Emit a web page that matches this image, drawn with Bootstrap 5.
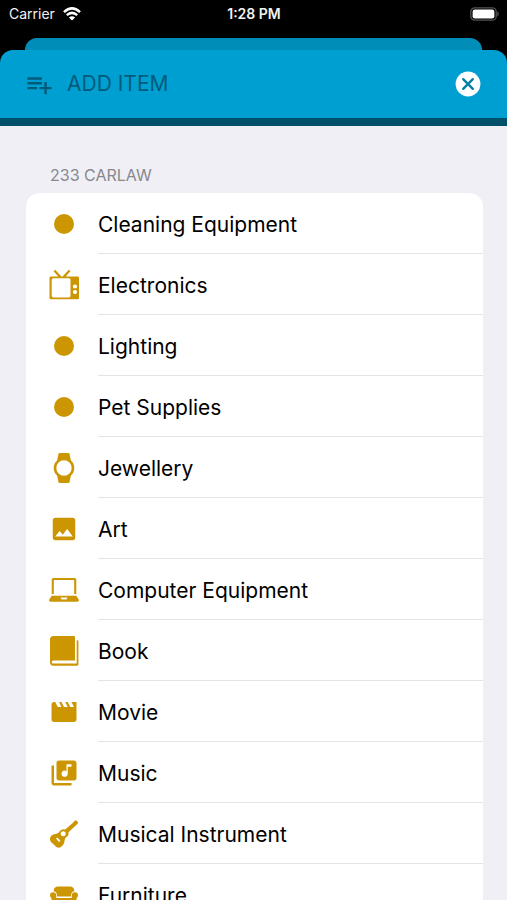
<!DOCTYPE html>
<html lang="en">
<head>
<meta charset="utf-8">
<meta name="viewport" content="width=device-width, initial-scale=1">
<title>Add Item</title>
<link href="https://cdn.jsdelivr.net/npm/bootstrap@5.3.0/dist/css/bootstrap.min.css" rel="stylesheet">
<style>
  body { font-family: Inter, "Liberation Sans", sans-serif; background: #f0eff5; color: #000; }
  .top-area { background: #000; }
  .status-bar { height: 38px; padding: 0 8px 10px 9px; font-size: 14px; line-height: 20px; color: #f2f2f2; }
  .back-sheet { height: 12px; margin: 0 25px; background: #008eb8; border-radius: 12px 12px 0 0; }
  .sheet-header { height: 76px; padding: 0 26px 0 25px; background: #009fd1; border-bottom: 8px solid #005069; border-radius: 13px 13px 0 0; color: #005b7a; }
  .sheet-title { margin: 0 0 0 13px; font-size: 21px; line-height: 28px; font-weight: 400; }
  .scroll-area { padding: 38px 24px 0 26px; scrollbar-width: none; }
  .scroll-area::-webkit-scrollbar { display: none; }
  .group-label { padding: 0 24px; margin-bottom: 7px; font-size: 16px; line-height: 22px; font-weight: 400; color: #88888d; }
  .item-list { border-radius: 13px; --bs-list-group-border-width: 0; }
  .item-row { display: flex; align-items: stretch; gap: 19px; height: 61px; padding: 0 0 0 23px; font-size: 21px; line-height: 28px; color: #000; }
  .item-row svg { width: 30px; height: 30px; flex: none; align-self: center; fill: #cc9602; }
  .item-row .item-text { border-bottom: 1px solid #e4e4e6; padding-top: 4px; }
</style>
</head>
<body class="vh-100 d-flex flex-column overflow-hidden">
<header class="top-area flex-shrink-0">
  <div class="status-bar row g-0 align-items-center">
    <div class="col d-flex align-items-center gap-2">
      <span>Carrier</span>
      <svg width="18" height="14" viewBox="0 0 18 14" fill="none" stroke="#fff" stroke-width="2.5" aria-hidden="true"><path d="M1 5.1Q9-2.3 17 5.1M3.8 8.1q5.2-4.5 10.4 0"/><path d="M9 13.6 5.9 10.5q3.1-2.4 6.2 0z" fill="#fff" stroke="none"/></svg>
    </div>
    <div class="col-auto fw-semibold">1:28 PM</div>
    <div class="col d-flex justify-content-end">
      <svg width="29" height="14" viewBox="0 0 29 14" aria-hidden="true"><rect x=".8" y=".8" width="25.4" height="12.4" rx="4" fill="none" stroke="#555" stroke-width="1.3"/><rect x="2.6" y="2.500" width="21.800" height="9" rx="2.300" fill="#fff"/><path d="M27.300 4.600q1.500.5 1.500 2.400t-1.500 2.400z" fill="#555"/></svg>
    </div>
  </div>
  <div class="back-sheet"></div>
  <div class="sheet-header d-flex align-items-center">
    <svg width="29" height="29" viewBox="0 0 24 24" fill="currentColor" aria-hidden="true"><path d="M14 10H2v2h12v-2zm0-4H2v2h12V6zm4 8v-4h-2v4h-4v2h4v4h2v-4h4v-2h-4zM2 16h8v-2H2v2z"/></svg>
    <h1 class="sheet-title flex-grow-1 text-uppercase">Add Item</h1>
    <button type="button" class="btn p-0 border-0 d-flex" aria-label="Close">
      <svg width="26" height="26" viewBox="0 0 26 26" aria-hidden="true"><circle cx="13" cy="13" r="12.400" fill="#fff"/><path d="m8.200 8.200 9.600 9.600m0-9.600-9.600 9.600" stroke="#087fa5" stroke-width="2.400" stroke-linecap="round"/></svg>
    </button>
  </div>
</header>
<main class="scroll-area flex-grow-1 overflow-auto">
  <h2 class="group-label text-uppercase">233 Carlaw</h2>
  <div class="list-group item-list overflow-hidden">
    <button type="button" class="list-group-item list-group-item-action item-row"><svg viewBox="0 0 30 30"><circle cx="15" cy="15" r="10"/></svg><span class="item-text d-flex align-items-center flex-grow-1">Cleaning Equipment</span></button>
    <button type="button" class="list-group-item list-group-item-action item-row"><svg viewBox="0 0 30 30"><path fill-rule="evenodd" d="M4.500 1.200 6.300-.2 12.400 6.400h1.200L19.700-.2 21.500 1.200 16.700 6.400H28.600q1.400 0 1.400 1.400V28q0 1.300-1.400 1.300H1.900Q.5 29.300.5 28V7.800Q.5 6.400 1.900 6.400H9.300zM4.500 8.300Q2.700 8.300 2.700 10v15.700q0 1.700 1.800 1.700H20q1.500 0 1.500-1.700V10q0-1.700-1.500-1.700zM26 14.400a2.100 2.100 0 1 0 0 4.200a2.100 2.100 0 1 0 0-4.200zm0 5.600a2.100 2.100 0 1 0 0 4.200a2.100 2.100 0 1 0 0-4.200z"/></svg><span class="item-text d-flex align-items-center flex-grow-1">Electronics</span></button>
    <button type="button" class="list-group-item list-group-item-action item-row"><svg viewBox="0 0 30 30"><circle cx="15" cy="15" r="10"/></svg><span class="item-text d-flex align-items-center flex-grow-1">Lighting</span></button>
    <button type="button" class="list-group-item list-group-item-action item-row"><svg viewBox="0 0 30 30"><circle cx="15" cy="15" r="10"/></svg><span class="item-text d-flex align-items-center flex-grow-1">Pet Supplies</span></button>
    <button type="button" class="list-group-item list-group-item-action item-row"><svg viewBox="0 0 30 30"><path fill-rule="evenodd" d="M10.500 0h9q.8 0 1 .8l1.400 6.700a10 10 0 0 1 0 15l-1.400 6.700q-.2.800-1 .800h-9q-.800 0-1-.800l-1.400-6.700a10 10 0 0 1 0-15L9.500.800q.200-.800 1-.800zM15 7.300a7.700 7.700 0 1 0 0 15.400a7.700 7.700 0 1 0 0-15.400z"/></svg><span class="item-text d-flex align-items-center flex-grow-1">Jewellery</span></button>
    <button type="button" class="list-group-item list-group-item-action item-row"><svg viewBox="0 0 24 24"><path d="M21 19V5c0-1.100-.9-2-2-2H5c-1.100 0-2 .9-2 2v14c0 1.100.9 2 2 2h14c1.100 0 2-.9 2-2zM8.500 13.500l2.500 3.010L14.500 12l4.500 6H5l3.500-4.500z"/></svg><span class="item-text d-flex align-items-center flex-grow-1">Art</span></button>
    <button type="button" class="list-group-item list-group-item-action item-row"><svg viewBox="0 0 30 30"><path fill-rule="evenodd" d="M4.500 3h21q1.800 0 1.800 1.800V19h-2.100V5.700q0-.700-.700-.700h-19q-.700 0-.700.700V19H2.700V4.800Q2.700 3 4.500 3zM2.700 20.700h24.600L30 25q0 1.700-1.500 1.700h-27Q0 26.700 0 25zM11.500 22.500l1 2h5l1-2z"/></svg><span class="item-text d-flex align-items-center flex-grow-1">Computer Equipment</span></button>
    <button type="button" class="list-group-item list-group-item-action item-row"><svg viewBox="0 0 30 30"><path fill-rule="evenodd" d="M4.500 0H25q1 0 1 1v23.500H4.300q-1.600 0-1.600 1.500t1.600 1.500H27.700V4.200H28.600Q29.400 4.200 29.400 5.200V28.500q0 1.300-1.400 1.300H4.500Q1 29.800 1 26.300V3.500Q1 0 4.500 0z"/></svg><span class="item-text d-flex align-items-center flex-grow-1">Book</span></button>
    <button type="button" class="list-group-item list-group-item-action item-row"><svg viewBox="0 0 24 24"><path d="M18 4l2 4h-3l-2-4h-2l2 4h-3l-2-4H8l2 4H7L5 4H4c-1.100 0-1.990.9-1.990 2L2 18c0 1.100.9 2 2 2h16c1.100 0 2-.9 2-2V4h-4z"/></svg><span class="item-text d-flex align-items-center flex-grow-1">Movie</span></button>
    <button type="button" class="list-group-item list-group-item-action item-row"><svg viewBox="0 0 24 24"><path d="M20 2H8c-1.100 0-2 .9-2 2v12c0 1.100.9 2 2 2h12c1.100 0 2-.9 2-2V4c0-1.100-.9-2-2-2zm-2 5h-3v5.500c0 1.380-1.120 2.500-2.500 2.500S10 13.880 10 12.500s1.120-2.500 2.500-2.500c.57 0 1.080.19 1.500.51V5h4v2zM4 6H2v14c0 1.100.9 2 2 2h14v-2H4V6z"/></svg><span class="item-text d-flex align-items-center flex-grow-1">Music</span></button>
    <button type="button" class="list-group-item list-group-item-action item-row"><svg viewBox="0 0 30 30"><path fill-rule="evenodd" d="M27 1.300 29.200 3.300Q29 5 27.500 5.800L19.500 13.200Q20 16.500 17.400 18.100 15.800 19 15.600 21.500 15.200 26 11.500 28.300 9.600 29.300 7.400 28.100L2 23Q.3 21 1.200 18.500 2.400 15.200 7.300 14.700 9.700 14.400 10.700 12.200 12.500 9.600 16.200 10.400L24 3.700Q25.300 1.700 27 1.300zM14.200 12.200a2.500 2.500 0 1 0 0 5a2.500 2.500 0 1 0 0-5zM8.300 18.500 7 19.800l3 3.300 1.400-1.300z"/></svg><span class="item-text d-flex align-items-center flex-grow-1">Musical Instrument</span></button>
    <button type="button" class="list-group-item list-group-item-action item-row"><svg viewBox="0 0 30 30"><path d="M9.300 6.600H20.700Q25.300 6.600 25.300 11.200 22 11.700 21.800 16.500H8.200Q8 11.700 4.700 11.200 4.700 6.600 9.300 6.600zM4 12.300q3.300 0 3.300 3.500V18H22.700V15.800q0-3.500 3.300-3.500 3 0 3 3 0 2-1.400 2.700V24q0 1-1 1h-2.200l-.7-1.300H6.300L5.600 25H3.400q-1 0-1-1V18Q1 17.300 1 15.300q0-3 3-3z"/></svg><span class="item-text d-flex align-items-center flex-grow-1">Furniture</span></button>
  </div>
</main>
<script src="https://cdn.jsdelivr.net/npm/bootstrap@5.3.0/dist/js/bootstrap.bundle.min.js"></script>
</body>
</html>
